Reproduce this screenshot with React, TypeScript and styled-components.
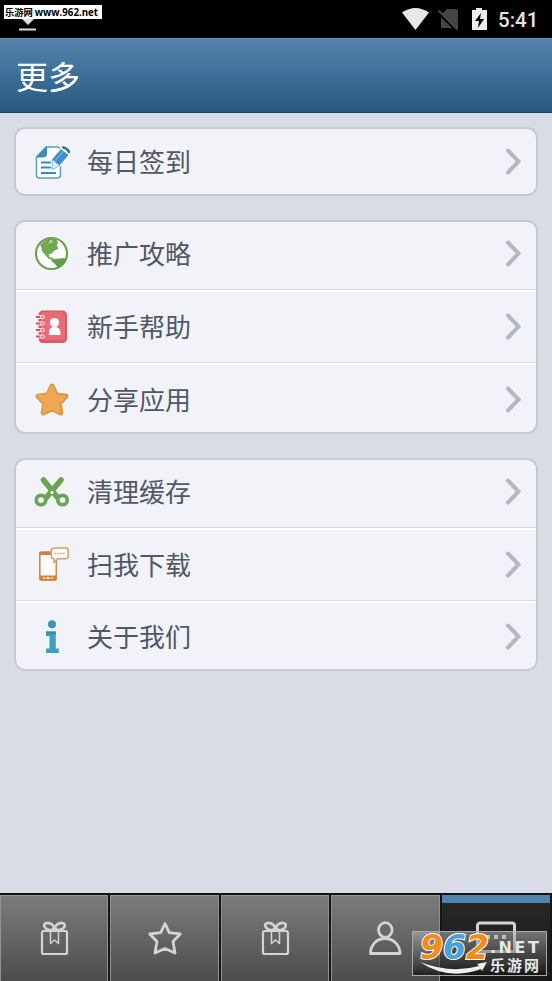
import React from 'react';
import styled, { createGlobalStyle } from 'styled-components';

const GlobalStyle = createGlobalStyle`
  * { box-sizing: border-box; }
  body { margin: 0; background: #d7dbe5; font-family: Roboto, "Noto Sans CJK SC", sans-serif; }
  svg { display: block; flex: none; }
`;

const Screen = styled.div`
  width: 552px;
  height: 981px;
  display: flex;
  flex-direction: column;
  overflow: hidden;
  position: relative;
  background: #d7dce5;
`;

const StatusBar = styled.div`
  height: 38px;
  flex: none;
  background: #000;
  display: flex;
  justify-content: flex-end;
  padding-right: 14px;
  position: relative;
`;

const Clock = styled.span`
  color: #e3e3e3;
  font: 500 20.5px/38px Roboto, sans-serif;
  margin-left: 10px;
  padding-top: 1px;
  width: 40px;
  white-space: nowrap;
`;

const Download = styled.svg`
  position: absolute;
  left: 18px;
  top: 14px;
`;

const SiteTag = styled.div`
  position: absolute;
  left: 4px;
  top: 5px;
  width: 98px;
  height: 14px;
  background: #fff;
  color: #000;
  display: flex;
  justify-content: space-between;
  padding: 0 4px 0 1px;
  font: 700 9.3px/15px "Noto Sans CJK SC", sans-serif;
  white-space: nowrap;
`;

const SiteUrl = styled.span`
  font: 700 9.7px/15px "Open Sans", sans-serif;
`;

const Header = styled.header`
  height: 75px;
  flex: none;
  padding-left: 16px;
  background: linear-gradient(#5483aa, #3f719a 45%, #29587f);
  border-top: 1px solid #6b91b0;
  border-bottom: 1px solid #1d4468;
  color: #fff;
  font: 400 32px/72px "Noto Sans CJK SC", sans-serif;
`;

const Content = styled.main`
  flex: 1;
  padding: 14px 14px 0;
  display: flex;
  flex-direction: column;
  gap: 24px;
`;

const Card = styled.section`
  border: 2px solid #c5c9d4;
  border-radius: 11px;
  background: #f1f3f9;
  overflow: hidden;
  flex: none;
`;

const Row = styled.div<{ $height: number }>`
  height: ${p => p.$height}px;
  display: flex;
  align-items: center;
  padding: 0 14px 0 18px;
  color: #505767;
  font: 400 26px/36px "Noto Sans CJK SC", sans-serif;
  &:first-child:not(:last-child) { padding-bottom: 4px; }
  &:last-child:not(:first-child) { padding-top: 4px; }
  &:not(:first-child):not(:last-child) { padding-top: 2px; }
  & + & {
    border-top: 1px solid #d8dbe3;
    box-shadow: inset 0 2px 0 #fff;
  }
`;

const RowLabel = styled.span`
  flex: 1;
  margin-left: 17px;
  padding-bottom: 2px;
`;

const TabBar = styled.nav`
  height: 88px;
  flex: none;
  background: #151515;
  padding-top: 2px;
  display: grid;
  grid-template-columns: repeat(5, 1fr);
`;

const Tab = styled.div<{ $active?: boolean }>`
  margin-right: 2px;
  display: flex;
  justify-content: center;
  padding-top: 25px;
  border: 1px solid ${p => (p.$active ? '#242424' : '#929292')};
  border-bottom: 0;
  ${p => p.$active && 'border: 0; padding-top: 26px; box-shadow: inset 0 8px 0 #5384b0;'}
  background: ${p => (p.$active ? 'linear-gradient(#292929, #181818)' : 'linear-gradient(#7c7c7c, #4c4c4c)')};
`;

const Watermark = styled.svg`
  position: absolute;
  left: 412px;
  top: 931px;
`;

type IconName = 'note' | 'globe' | 'contacts' | 'star' | 'scissors' | 'phone' | 'info';

const RowIcon = ({ name }: { name: IconName }) => (
  <svg width="36" height="36" viewBox="0 0 36 36" fill="none">
    {name === 'note' && (
      <>
        <path d="M12 3h11.500a3 3 0 0 1 3 3v25a3 3 0 0 1-3 3h-18a3 3 0 0 1-3-3V13z" fill="#fff" stroke="#5b9dc0" strokeWidth="1.5" />
        <path d="M12.500 3v7q0 3-3 3H3z" fill="#3f8bb8" stroke="#3f8bb8" />
        <path d="M7 18.500h10M7 23.500h10M7 29h15" stroke="#3988bb" strokeWidth="1.9" />
        <path d="M17.500 15.500L27.500 4l8.300 6L26 21.500l-7.500 4.300z" fill="#fff" stroke="#fff" strokeWidth="2" />
        <path d="M18 15.500L27 5l7.500 6L25.500 21.500z" fill="#3d8ecb" />
        <path d="M20.500 17.500L29.500 7" stroke="#66aedd" strokeWidth="1.5" />
        <path d="M18 15.500l7.500 6-7 4.200z" fill="#e3f1fa" stroke="#6ba5c9" strokeWidth=".8" />
        <path d="M28.300 3.300q4.500.5 7.400 5.500" stroke="#2f7297" strokeWidth="2.600" />
      </>
    )}
    {name === 'globe' && (
      <>
        <circle cx="17.500" cy="17.500" r="15.500" fill="#fff" stroke="#6ca154" strokeWidth="2.200" />
        <path d="M6 9Q12 1.500 21 2l3 4-1 3 1 4-4 2-3 3-2 0 0 3 4 1 3 3-3-1-4-1-3-3-4-5-1-5z" fill="#70a857" />
        <path d="M17 24.500q7-3 15.500-2Q29.500 29.500 24 32l-3-4z" fill="#639c48" />
        <path d="M15 7.500l2-3 2 2" stroke="#fff" strokeWidth="1" />
      </>
    )}
    {name === 'contacts' && (
      <>
        <rect x="4.500" y="1.500" width="28.500" height="32.500" rx="4.500" fill="#d65b65" />
        <rect x="7" y="3" width="24" height="28" rx="3" fill="#e56d75" />
        <circle cx="20.500" cy="13.500" r="4.600" fill="#fff" />
        <path d="M15 26v-3q0-5 5.500-5t6 5v3z" fill="#fff" />
        {[8, 14.500, 21, 27.500].map(y => (
          <g key={y}>
            <path d={`M1.5 ${y}h6`} stroke="#fbeff1" strokeWidth="4" />
            <path d={`M2 ${y}h6`} stroke="#d4535d" strokeWidth="1.8" />
            <circle cx="8.500" cy={y} r="1.700" fill="#e46a73" stroke="#fff" strokeWidth="1" />
          </g>
        ))}
      </>
    )}
    {name === 'star' && (
      <>
        <path d="M18 4l4.300 9 9.600 1.200-6.600 7.200 1.500 9.600-8.800-4.300-8.800 4.300 1.500-9.600-6.600-7.200 9.600-1.200z" fill="#d8964a" stroke="#d8964a" strokeWidth="5" strokeLinejoin="round" />
        <path d="M17.500 5.500l4 8.500 8.500 1.200-6.500 6 1.500 8.300-7.500-4.500-7.500 4.500 1.500-9-6-6 8-1z" fill="#eda853" stroke="#eda853" strokeWidth="3.500" strokeLinejoin="round" />
      </>
    )}
    {name === 'scissors' && (
      <g stroke="#6ba454">
        <path d="M9.500 6L24 24" strokeWidth="5.600" strokeLinecap="round" />
        <path d="M27 6L12 24" strokeWidth="5.600" strokeLinecap="round" />
        <circle cx="7" cy="26" r="4.700" fill="#f8fbf8" strokeWidth="3.700" />
        <circle cx="28.500" cy="26" r="4.700" fill="#f8fbf8" strokeWidth="3.700" />
        <circle cx="18" cy="18.500" r="1.500" fill="#fff" stroke="none" />
      </g>
    )}
    {name === 'phone' && (
      <>
        <rect x="5.800" y="5" width="16.500" height="28" rx="2" fill="#fbfbfc" stroke="#cf8e4c" strokeWidth="1.600" />
        <path d="M5.500 6.300h14" stroke="#ca843d" strokeWidth="3.200" />
        <path d="M5.500 31h17" stroke="#ca843d" strokeWidth="5" />
        <path d="M9.500 31h1.500m1.500 0h3m1.500 0h1.500" stroke="#ffe2b0" strokeWidth="1.800" />
        <path d="M20.500 1h11a2.700 2.700 0 0 1 2.700 2.700V9a2.700 2.700 0 0 1-2.700 2.700h-7.800L20 15.500v-3.800A2.700 2.700 0 0 1 17.300 9V3.700A2.700 2.700 0 0 1 20.500 1z" fill="#fdfcfb" stroke="#d39e70" strokeWidth="1.500" />
        <path d="M20.500 6.500h10.500" stroke="#d5ab85" strokeWidth="1.500" strokeDasharray="1.8 1" />
      </>
    )}
    {name === 'info' && (
      <>
        <circle cx="18" cy="5.300" r="4" fill="#4294b3" />
        <path d="M12 12.500h9.800v17h3v4.500H12v-4.500h3.500V17H12z" fill="#3f9fbc" />
        <path d="M12 12.500h9.800v3H12z" fill="#378ba9" />
      </>
    )}
  </svg>
);

const Chevron = () => (
  <svg width="18" height="30" viewBox="0 0 18 30" fill="none" stroke="#b3b8c4" strokeWidth="4">
    <path d="M4 3.500L14.500 14.500 4 25.500" strokeLinecap="round" />
  </svg>
);

type TabName = 'gift' | 'favorite' | 'user' | 'more';

const TabIcon = ({ name }: { name: TabName }) => (
  <svg width="42" height="36" viewBox="0 0 42 36" fill="none" stroke="#d4d4d4" strokeWidth="2.200" strokeLinejoin="round">
    {name === 'gift' && (
      <>
        <rect x="9" y="10" width="25" height="23" rx="1.800" />
        <path d="M17.500 10v12.500l4-3.500 4 3.500V10" strokeWidth="1.500" />
        <ellipse cx="16" cy="5.500" rx="5" ry="3.200" transform="rotate(22 16 5.5)" strokeWidth="2.800" />
        <ellipse cx="27" cy="5.500" rx="5" ry="3.200" transform="rotate(-22 27 5.5)" strokeWidth="2.800" />
      </>
    )}
    {name === 'favorite' && (
      <path d="M21 2.500l4.300 9.200 11 1.300-7.300 7.500 2 11.500-10-4.500-10 4.500 2-11.500-7.300-7.500 11-1.300z" strokeWidth="2.800" />
    )}
    {name === 'user' && (
      <>
        <path d="M6.500 32.500v-1C7 24.500 12 17.500 21 17.500S35.500 24.500 36 31.500v1z" strokeWidth="2.800" />
        <ellipse cx="21.300" cy="9" rx="6.800" ry="7.300" fill="#696969" strokeWidth="2.800" />
      </>
    )}
    {name === 'more' && (
      <>
        <path d="M5 2h32a2.500 2.500 0 0 1 2.500 2.500v26H2.500v-26A2.500 2.500 0 0 1 5 2z" strokeWidth="3" />
        <path d="M11 16h4m4 0h4m4 0h4" strokeWidth="4" />
      </>
    )}
  </svg>
);

const groups: { icon: IconName; label: string; height: number }[][] = [
  [{ icon: 'note', label: '每日签到', height: 65 }],
  [
    { icon: 'globe', label: '推广攻略', height: 67 },
    { icon: 'contacts', label: '新手帮助', height: 73 },
    { icon: 'star', label: '分享应用', height: 70 },
  ],
  [
    { icon: 'scissors', label: '清理缓存', height: 67 },
    { icon: 'phone', label: '扫我下载', height: 73 },
    { icon: 'info', label: '关于我们', height: 69 },
  ],
];

const tabs: TabName[] = ['gift', 'favorite', 'gift', 'user', 'more'];

export default function App() {
  return (
    <>
      <GlobalStyle />
      <Screen>
        <StatusBar>
          <Download width="20" height="18"><path d="M3 4h14l-7 7z" fill="#ddd" /><path d="M1 15.500h17" stroke="#ddd" strokeWidth="2" /></Download>
          <SiteTag><span>乐游网</span><SiteUrl>www.962.net</SiteUrl></SiteTag>
          <svg width="86" height="38">
            <path d="M0 12.500Q13.500 3.500 27 12.500L13.500 30z" fill="#e8e8e8" />
            <path d="M45 9h9q2 0 2 2v17H39V15z" fill="#444" />
            <path d="M36 12l19 19" stroke="#000" strokeWidth="3" />
            <path d="M36.500 10.500l19 19" stroke="#4c4c4c" strokeWidth="1.800" />
            <path d="M74 8h6v2h5v20H70V10h4z" fill="#ececec" />
            <path d="M79 13l-6 8h4l-1 7 6-9h-4z" fill="#000" />
          </svg>
          <Clock>5:41</Clock>
        </StatusBar>
        <Header>更多</Header>
        <Content>
          {groups.map((rows, i) => (
            <Card key={i}>
              {rows.map(row => (
                <Row key={row.label} $height={row.height}>
                  <RowIcon name={row.icon} />
                  <RowLabel>{row.label}</RowLabel>
                  <Chevron />
                </Row>
              ))}
            </Card>
          ))}
        </Content>
        <TabBar>
          {tabs.map((tab, i) => (
            <Tab key={i} $active={tab === 'more'}><TabIcon name={tab} /></Tab>
          ))}
        </TabBar>
        <Watermark width="135" height="45" viewBox="0 0 135 45">
          <defs>
            <linearGradient id="plate" x2="0" y2="1">
              <stop stopColor="#bbb" stopOpacity=".55" />
              <stop offset=".5" stopColor="#666" stopOpacity=".55" />
              <stop offset="1" stopColor="#111" stopOpacity=".8" />
            </linearGradient>
          </defs>
          <rect x=".5" y=".5" width="134" height="44" fill="url(#plate)" stroke="#aaa" />
          <text x="8" y="27.500" fontFamily="DejaVu Sans, sans-serif" fontWeight="700" fontStyle="italic" fontSize="33" stroke="#fff" strokeWidth="2" paintOrder="stroke" fill="#f18b1c">
            9<tspan fill="#4aa0d8">6</tspan>2
          </text>
          <text x="78" y="21.500" fontFamily="DejaVu Sans, sans-serif" fontWeight="700" fontSize="16" letterSpacing="2.500" fill="#e6e6e6">.NET</text>
          <text x="78" y="39.500" fontFamily="Noto Sans CJK SC, sans-serif" fontWeight="700" fontSize="15" letterSpacing="2" fill="#e6e6e6">乐游网</text>
          <path d="M8 31Q39 43 67 35l-2-2 10-2-5 9-1-2Q36 50 8 31z" fill="#eee" />
        </Watermark>
      </Screen>
    </>
  );
}
